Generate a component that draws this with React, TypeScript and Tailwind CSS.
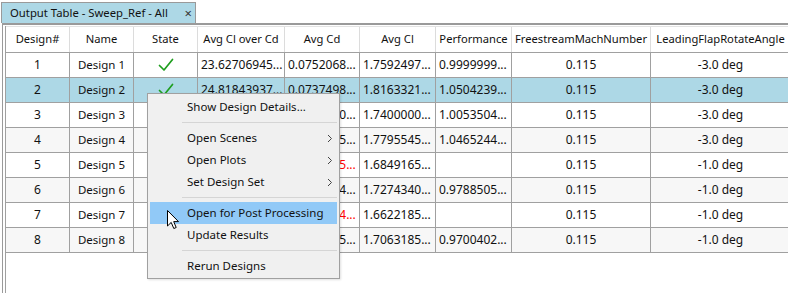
import React from 'react';

type Row = {
  id: number;
  ok: boolean;
  ratio: string;
  cd: string;
  cl: string;
  perf: string;
  angle: string;
  warn?: boolean;
};

const rows: Row[] = [
  { id: 1, ok: true, ratio: '23.62706945...', cd: '0.0752068...', cl: '1.7592497...', perf: '0.9999999...', angle: '-3.0 deg' },
  { id: 2, ok: true, ratio: '24.81843937...', cd: '0.0737498...', cl: '1.8163321...', perf: '1.0504239...', angle: '-3.0 deg' },
  { id: 3, ok: true, ratio: '23.65870329...', cd: '0.0735470...', cl: '1.7400000...', perf: '1.0053504...', angle: '-3.0 deg' },
  { id: 4, ok: true, ratio: '24.32406117...', cd: '0.0731635...', cl: '1.7795545...', perf: '1.0465244...', angle: '-3.0 deg' },
  { id: 5, ok: false, ratio: '22.67894519...', cd: '0.0742925...', cl: '1.6849165...', perf: '', angle: '-1.0 deg', warn: true },
  { id: 6, ok: true, ratio: '23.38985234...', cd: '0.0738514...', cl: '1.7274340...', perf: '0.9788505...', angle: '-1.0 deg' },
  { id: 7, ok: false, ratio: '22.17488204...', cd: '0.0749624...', cl: '1.6622185...', perf: '', angle: '-1.0 deg', warn: true },
  { id: 8, ok: true, ratio: '23.15513866...', cd: '0.0736885...', cl: '1.7063185...', perf: '0.9700402...', angle: '-1.0 deg' },
];

const headers = [
  'Design#',
  'Name',
  'State',
  'Avg Cl over Cd',
  'Avg Cd',
  'Avg Cl',
  'Performance',
  'FreestreamMachNumber',
  'LeadingFlapRotateAngle',
];

const cols = 'grid grid-cols-[64px_64px_64px_87px_75px_76px_76px_139px_140px]';
const cell = 'flex items-center border-r border-b border-[#a0a0a0]';
const num = `${cell} overflow-hidden whitespace-nowrap pl-[3px] text-[12px]`;

const Check = () => (
  <svg width="16" height="14" viewBox="0 0 16 14" className="block">
    <path d="M1.5 7.5 L6 12 L14.5 1.5" fill="none" stroke="#1e9e1e" strokeWidth="1.7" strokeLinecap="round" strokeLinejoin="round" />
  </svg>
);

const Chevron = () => (
  <svg width="6" height="9" viewBox="0 0 6 9" className="block">
    <path d="M1 1 L4.5 4.5 L1 8" fill="none" stroke="#444" strokeWidth="1" />
  </svg>
);

const MenuItem = ({ label, sub, active }: { label: string; sub?: boolean; active?: boolean }) => (
  <div
    className={`mx-[2px] flex h-[22px] items-center whitespace-nowrap pr-[4px] pl-[37px] ${active ? 'bg-[#91c9f7]' : ''}`}
  >
    <span className="flex-1">{label}</span>
    {sub && <Chevron />}
  </div>
);

const Separator = () => <div className="my-[4px] ml-[34px] mr-[2px] h-px bg-[#d5d5d5]" />;

export default function App() {
  return (
    <div className="relative h-[293px] w-[788px] overflow-hidden bg-white font-['Noto_Sans',sans-serif] text-[11.5px] text-[#111]">
      <div className="flex h-[23px] items-end">
        <div className="ml-[1px] flex h-[21px] w-[195px] items-center border-x border-t border-[#9a9a9a] bg-[#add8e6] pr-[3px] pl-[8px]">
          <span className="flex-1 whitespace-nowrap text-[11.3px]">Output Table - Sweep_Ref - All</span>
          <span className="text-[13px] leading-none text-[#333]">×</span>
        </div>
      </div>

      <div className="ml-[2px] h-[270px] border-t-2 border-l border-[#9a9a9a] pt-[1px] pl-[2px]">
        <div className="h-full border-l border-[#a0a0a0]">
          <div className={`${cols} h-[27px] border-t border-b border-t-[#e3e3e3] border-b-[#a0a0a0] text-[11.2px]`}>
            {headers.map((h) => (
              <div key={h} className="flex items-center justify-center overflow-hidden whitespace-nowrap border-r border-[#dcdcdc]">
                {h}
              </div>
            ))}
          </div>

          {rows.map((r) => {
            const bg = r.id === 2 ? 'bg-[#add8e6]' : r.id % 2 === 0 ? 'bg-[#f7f7f7]' : 'bg-white';
            return (
              <div key={r.id} className={`${cols} h-[25px] ${bg}`}>
                <div className={`${cell} justify-center text-[12px]`}>{r.id}</div>
                <div className={`${cell} justify-center`}>Design {r.id}</div>
                <div className={`${cell} justify-center`}>{r.ok && <Check />}</div>
                <div className={num}>{r.ratio}</div>
                <div className={`${num} ${r.warn ? 'text-[#ff0000]' : ''}`}>{r.cd}</div>
                <div className={num}>{r.cl}</div>
                <div className={num}>{r.perf}</div>
                <div className={`${cell} justify-center text-[12px]`}>0.115</div>
                <div className={`${cell} justify-center text-[12px]`}>{r.angle}</div>
              </div>
            );
          })}
        </div>
      </div>

      {/* context menu */}
      <div className="absolute top-[93px] left-[147px] w-[193px] border border-[#a0a0a0] bg-[#f0f0f0] pt-[2px] pb-[1px] text-[#111] shadow-[1px_1px_2px_rgba(0,0,0,0.12)]">
        <MenuItem label="Show Design Details..." />
        <Separator />
        <MenuItem label="Open Scenes" sub />
        <MenuItem label="Open Plots" sub />
        <MenuItem label="Set Design Set" sub />
        <Separator />
        <MenuItem label="Open for Post Processing" active />
        <MenuItem label="Update Results" />
        <Separator />
        <MenuItem label="Rerun Designs" />
      </div>

      {/* mouse pointer */}
      <svg width="13" height="20" viewBox="0 0 13 20" className="absolute top-[210px] left-[167px]">
        <path d="M0.5 0.5 L0.5 16 L4.2 12.4 L6.8 18.5 L9.2 17.5 L6.7 11.6 L11.5 11.6 Z" fill="#fff" stroke="#000" strokeWidth="1" strokeLinejoin="round" />
      </svg>
    </div>
  );
}
